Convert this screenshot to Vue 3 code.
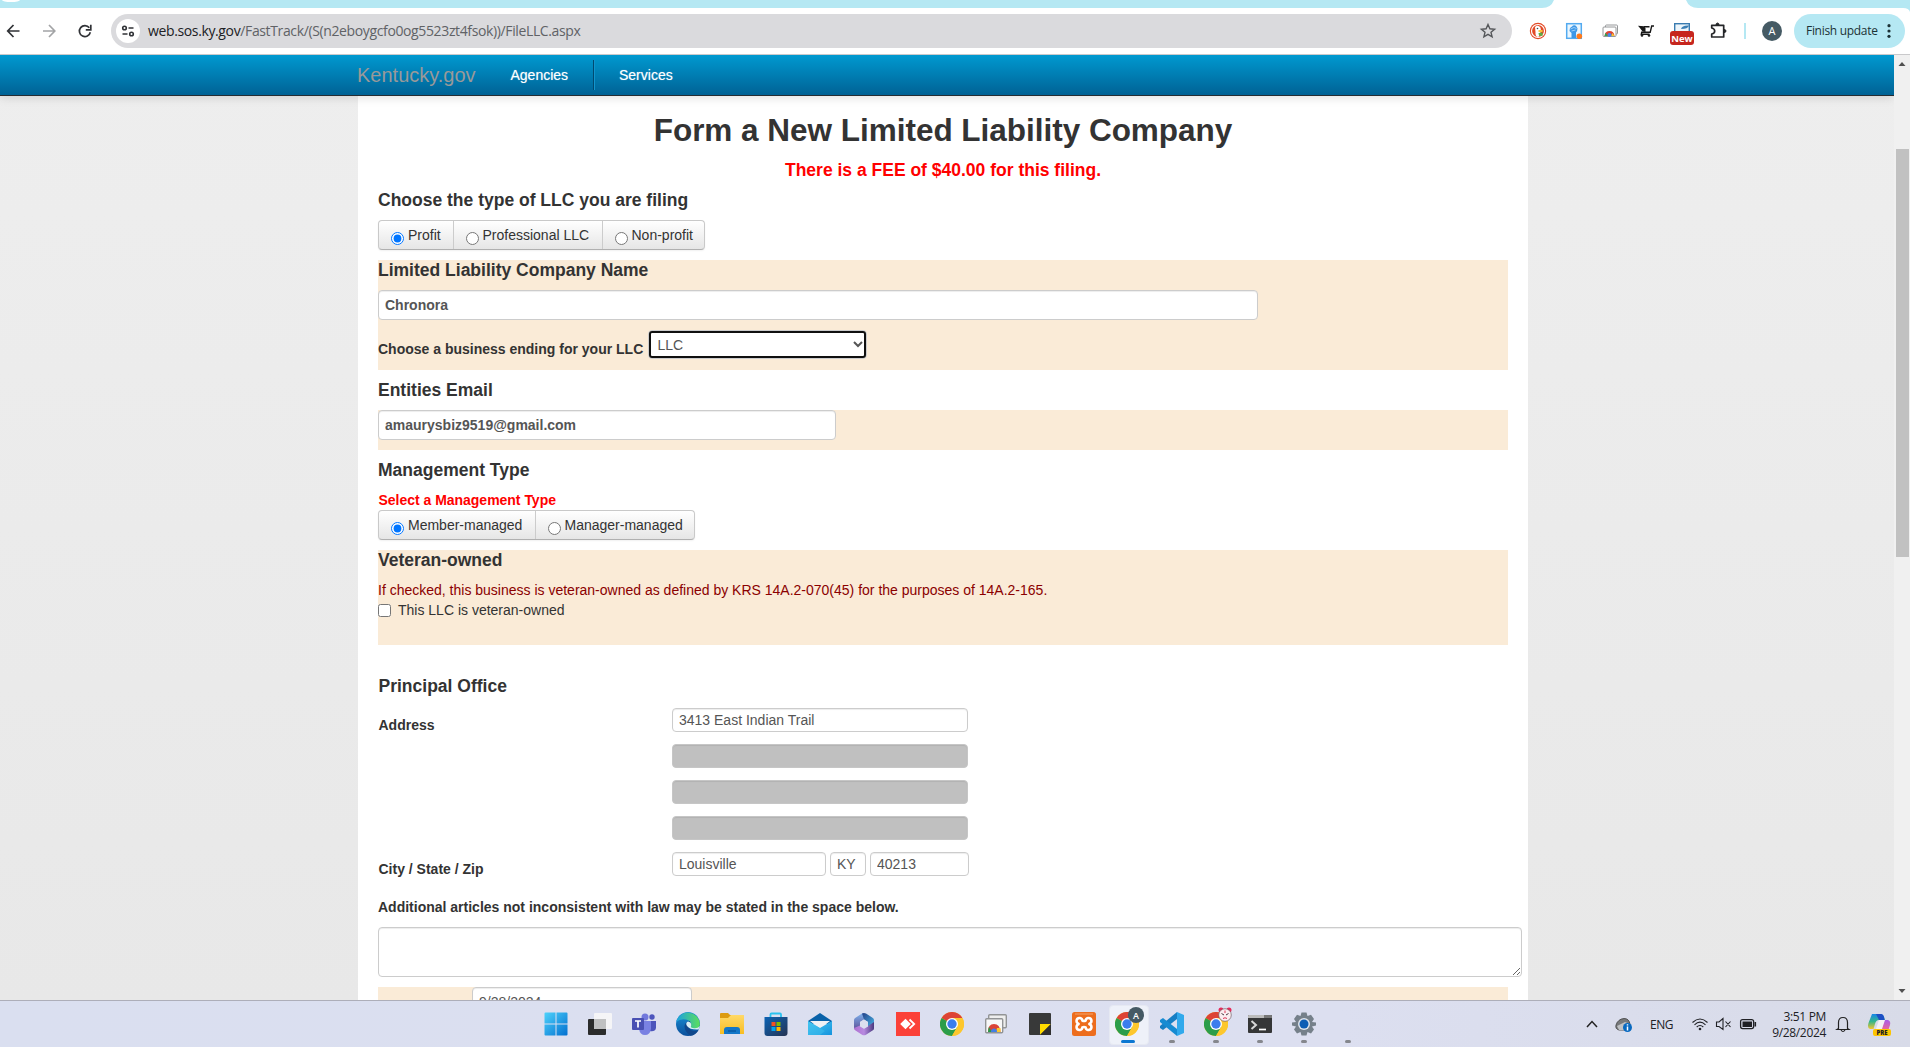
<script setup>
const llcTypes = [
  { label: 'Profit', checked: true, width: 73.5 },
  { label: 'Professional LLC', checked: false, width: 149 },
  { label: 'Non-profit', checked: false, width: 102.5 },
]
const managementTypes = [
  { label: 'Member-managed', checked: true, width: 155.5 },
  { label: 'Manager-managed', checked: false, width: 159.5 },
]
</script>

<template>
  <div class="screen">
    <div class="tabstrip">
      <svg width="1910" height="12" viewBox="0 0 1910 12">
        <rect width="1910" height="12" fill="#fff" />
        <path d="M0 0H1554Q1551 8 1542 8H0Z" fill="#b5e8f3" />
        <path d="M1686 0H1910V12Q1909 8 1903 8H1698Q1689 8 1686 0Z" fill="#b5e8f3" />
        <ellipse cx="11" cy="0" rx="9" ry="2" fill="#fff" />
      </svg>
    </div>

    <div class="toolbar">
      <svg class="nav-icons" width="111" height="46" viewBox="0 0 111 46" fill="none" stroke="#303236" stroke-width="1.7">
        <path d="M19.500 23H8M13.500 17L7.700 23L13.500 29" />
        <path d="M43 23H54.500M49 17L54.800 23L49 29" stroke="#a3a4a6" />
        <path d="M89.300 19.800A5.500 5.500 0 1 0 90.300 24.300" />
        <path d="M90.800 16.800V21.800H85.800" />
      </svg>
      <div class="omnibox">
        <svg class="site" width="24" height="24" viewBox="0 0 24 24" fill="none" stroke="#303236" stroke-width="1.6">
          <circle cx="12" cy="12" r="12" fill="#fff" stroke="none" />
          <circle cx="8.500" cy="9" r="1.800" /><path d="M12.500 9H17.500M6.500 15H11.500" /><circle cx="15.500" cy="15" r="1.800" />
        </svg>
        <div class="url"><b>web.sos.ky.gov</b>/FastTrack/(S(n2eboygcfo0og5523zt4fsok))/FileLLC.aspx</div>
        <svg width="18" height="18" viewBox="0 0 18 18" fill="none" stroke="#55575a" stroke-width="1.4"><path d="M9 2.500L10.900 6.800L15.600 7.200L12 10.300L13.100 14.900L9 12.400L4.900 14.900L6 10.300L2.400 7.200L7.100 6.800Z" /></svg>
      </div>
      <div class="extensions">
        <svg width="36" height="46" viewBox="0 0 36 46">
          <circle cx="18" cy="23" r="8.200" fill="#e34a26" /><circle cx="18" cy="23" r="6.500" fill="none" stroke="#fff" stroke-width="1.200" />
          <path d="M15 19Q18 16.500 20.500 19.500L21 23L18.500 29Q15 29 15.500 24Z" fill="#fff" />
          <path d="M18.500 22H22.500V24H18.500Z" fill="#fdc23b" /><path d="M18.500 25L22.500 24.500V28L19 27.500Z" fill="#57b044" /><circle cx="17.500" cy="20.500" r="0.800" fill="#355" />
        </svg>
        <svg width="36" height="46" viewBox="0 0 36 46">
          <rect x="10.700" y="15.700" width="14.600" height="14.600" fill="#eaf6fe" stroke="#53aaf0" stroke-width="1.500" />
          <path d="M14 20L16 18.500L17 17.500Q19 16.500 20.500 18.500L21.500 20.500Q21.500 23 20 24.500V30H15.500V25L13.500 23Z" fill="#3d98e8" />
          <path d="M14.500 21L18 19.500L20.500 20.500M15.500 23L19.500 22" stroke="#b5dcfa" fill="none" stroke-width=".8" /><circle cx="23.300" cy="28.300" r="2.800" fill="#ff7a1c" />
        </svg>
        <svg width="36" height="46" viewBox="0 0 36 46">
          <rect x="13.500" y="17" width="12" height="9" rx="1" fill="#fff" stroke="#96989a" /><rect x="11" y="19" width="13" height="9.500" rx="1" fill="#fff" stroke="#96989a" />
          <path d="M12.500 28Q13 23 17.500 23T22.500 28Z" fill="#df4434" /><path d="M12.500 28L13.500 24.700L16 28Z" fill="#30a350" /><path d="M22.500 28L20.500 25L19 28Z" fill="#fbc62b" /><circle cx="17.500" cy="27" r="2" fill="#4787eb" />
        </svg>
        <svg width="36" height="46" viewBox="0 0 36 46" fill="none" stroke="#171717" stroke-width="1.400">
          <path d="M10 17.800L16 18.300L17.500 20V24L14.500 23.500L12.500 20.800Z" fill="#171717" stroke="none" />
          <path d="M16 18.800H21.500M14 24.300H22.200L23.700 18H26M13.800 23.500L13.300 26.300H21.500" />
          <circle cx="14" cy="27.500" r="1" fill="#171717" stroke-width=".6" /><circle cx="21" cy="27.500" r="1" fill="#171717" stroke-width=".6" />
        </svg>
        <svg width="36" height="46" viewBox="0 0 36 46">
          <rect x="10.700" y="15.700" width="14.600" height="10" fill="#edf5fa" stroke="#397bb0" stroke-width="1.400" /><path d="M17 21Q18 17 25 17.500Q24 21 17 21Z" fill="#3b7eb4" />
          <rect x="6" y="23" width="24" height="14" rx="3" fill="#c6261e" />
          <text x="18" y="33.500" text-anchor="middle" class="new">New</text>
        </svg>
        <svg width="36" height="46" viewBox="0 0 36 46" fill="none" stroke="#252629" stroke-width="1.700">
          <path d="M11.700 17.300H23.700V29H11.700V26.200Q14.700 25.500 14.700 23.100T11.700 20Z" stroke-linejoin="round" /><path d="M16 17Q16 15 17.500 15T19 17ZM24 21.500Q26 21.500 26 23T24 24.500Z" fill="#252629" stroke-width="1" />
        </svg>
      </div>
      <div class="bar"></div>
      <div class="avatar">A</div>
      <div class="finish"><span>Finish update</span><svg width="4" height="16" viewBox="0 0 4 16" fill="#1c3236"><circle cx="2" cy="2.700" r="1.600" /><circle cx="2" cy="8" r="1.600" /><circle cx="2" cy="13.300" r="1.600" /></svg></div>
    </div>

    <div class="viewport">
      <div class="page">
        <nav class="navbar">
          <span class="brand">Kentucky.gov</span>
          <span class="link agencies">Agencies</span>
          <i class="divider"></i>
          <span class="link services">Services</span>
        </nav>
        <main class="panel">
          <h2><span>Form a New Limited Liability Company</span></h2>
          <p class="fee">There is a FEE of $40.00 for this filing.</p>
          <h4>Choose the type of LLC you are filing</h4>
          <div class="group">
            <label v-for="t in llcTypes" :key="t.label" :style="{ width: t.width + 'px' }"><input type="radio" name="llc" :checked="t.checked">{{ t.label }}</label>
          </div>

          <section class="band name-band">
            <h4>Limited Liability Company Name</h4>
            <input class="field strong company" value="Chronora">
            <div class="ending">
              <strong>Choose a business ending for your LLC</strong>
              <select><option>LLC</option></select>
            </div>
          </section>

          <h4>Entities Email</h4>
          <section class="band email-band"><input class="field strong email" value="amaurysbiz9519@gmail.com"></section>

          <h4>Management Type</h4>
          <p class="select-type">Select a Management Type</p>
          <div class="group tight">
            <label v-for="t in managementTypes" :key="t.label" :style="{ width: t.width + 'px' }"><input type="radio" name="mgmt" :checked="t.checked">{{ t.label }}</label>
          </div>

          <section class="band veteran-band">
            <h4>Veteran-owned</h4>
            <p class="note">If checked, this business is veteran-owned as defined by KRS 14A.2-070(45) for the purposes of 14A.2-165.</p>
            <label class="check"><input type="checkbox">This LLC is veteran-owned</label>
          </section>

          <h4 class="office">Principal Office</h4>
          <div class="row">
            <strong>Address</strong>
            <div class="stack">
              <input class="field" value="3413 East Indian Trail">
              <input class="field off" disabled>
              <input class="field off" disabled>
              <input class="field off" disabled>
            </div>
          </div>
          <div class="row city-row">
            <strong>City / State / Zip</strong>
            <div class="city">
              <input class="field town" value="Louisville">
              <input class="field state" value="KY">
              <input class="field zip" value="40213">
            </div>
          </div>
          <p class="articles">Additional articles not inconsistent with law may be stated in the space below.</p>
          <textarea></textarea>
          <section class="band date-band"><input class="field date" value="9/28/2024"></section>
        </main>
      </div>
      <div class="scrollbar">
        <svg width="16" height="20" viewBox="0 0 16 20"><path d="M8 7L11.500 11H4.500Z" fill="#505050" /></svg>
        <div class="thumb"></div>
        <svg width="16" height="20" viewBox="0 0 16 20"><path d="M8 13L11.500 9H4.500Z" fill="#505050" /></svg>
      </div>
    </div>

    <footer class="taskbar">
      <svg width="0" height="0" class="defs">
        <defs>
          <linearGradient id="win" x1="0" y1="0" x2="1" y2="1"><stop stop-color="#4dd2fb" /><stop offset="1" stop-color="#0370d0" /></linearGradient>
          <linearGradient id="edge1" x1="0" y1="0" x2="1" y2="0"><stop stop-color="#1ba0e2" /><stop offset="1" stop-color="#5bdf5c" /></linearGradient>
          <linearGradient id="edge2" x1="0" y1="0" x2="0" y2="1"><stop stop-color="#1a93d8" /><stop offset="1" stop-color="#0b4f9c" /></linearGradient>
          <linearGradient id="fold" x1="0" y1="0" x2="0" y2="1"><stop stop-color="#ffd968" /><stop offset="1" stop-color="#f8bd22" /></linearGradient>
          <linearGradient id="store" x1="0" y1="0" x2="1" y2="1"><stop stop-color="#0b63b5" /><stop offset="1" stop-color="#263352" /></linearGradient>
          <linearGradient id="mail" x1="0" y1="0" x2="1" y2="1"><stop stop-color="#47c9f3" /><stop offset="1" stop-color="#1593dd" /></linearGradient>
          <linearGradient id="m1" x1="0" y1="0" x2="0" y2="1"><stop stop-color="#7fb2ec" /><stop offset="1" stop-color="#5c4f96" /></linearGradient>
          <linearGradient id="m2" x1="0" y1="0" x2="1" y2="1"><stop stop-color="#243f86" /><stop offset="1" stop-color="#47b9ea" /></linearGradient>
          <linearGradient id="m3" x1="0" y1="0" x2="1" y2="0"><stop stop-color="#b06fd0" /><stop offset=".5" stop-color="#b78be0" /><stop offset="1" stop-color="#4a3a80" /></linearGradient>
          <linearGradient id="cop1" x1="0" y1="0" x2="0" y2="1"><stop stop-color="#1687e8" /><stop offset=".5" stop-color="#35b68b" /><stop offset="1" stop-color="#f7c62c" /></linearGradient>
          <linearGradient id="cop2" x1="0" y1="0" x2="0" y2="1"><stop stop-color="#a95de8" /><stop offset="1" stop-color="#f2688c" /></linearGradient>
          <symbol id="chrome" viewBox="0 0 24 24">
            <circle cx="12" cy="12" r="12" fill="#fdc72d" />
            <path d="M12 12L1.600 6A12 12 0 0 1 22.400 6Z" fill="#dd4335" />
            <path d="M12 12L1.600 6A12 12 0 0 0 12 24L17.200 15Z" fill="#2b9d4a" />
            <path d="M12 6H22.400A12 12 0 0 1 12 24L17.200 15Z" fill="#fdc72d" />
            <circle cx="12" cy="12" r="6" fill="#fff" /><circle cx="12" cy="12" r="4.700" fill="#3b7ded" />
          </symbol>
        </defs>
      </svg>
      <div class="apps">
        <div class="app"><svg width="24" height="24" viewBox="0 0 24 24" fill="url(#win)"><path d="M.5 1.500Q.5.500 1.500.500H11.500V11.500H.5ZM12.500.500H22.500Q23.500.500 23.500 1.500V11.500H12.500ZM.5 12.500H11.500V23.500H1.500Q.5 23.500.5 22.500ZM12.500 12.500H23.500V22.500Q23.500 23.500 22.500 23.500H12.500Z" /></svg></div>
        <div class="app"><svg width="24" height="24" viewBox="0 0 24 24"><rect y="7" width="18" height="16" rx="1" fill="#2b2c2c" /><rect x="6" y="1" width="18" height="16" rx="1" fill="#f5f5f7" /><path d="M6 7H18V17H6Z" fill="#bfc0c1" /></svg></div>
        <div class="app"><svg width="24" height="24" viewBox="0 0 24 24"><circle cx="13" cy="5" r="3.500" fill="#7279dc" /><circle cx="20" cy="5" r="2.700" fill="#4d55bd" /><path d="M16 9H24V16Q23 20 18 19Z" fill="#4c55bb" /><path d="M7 9H19V17Q18 23 13 23T7 17Z" fill="#7981e2" /><rect y="6" width="12" height="12" rx="1" fill="#4950b3" /><path d="M3 9H9M6 9V15.500" stroke="#fff" stroke-width="1.700" /></svg></div>
        <div class="app"><svg width="24" height="24" viewBox="0 0 24 24"><circle cx="12" cy="12" r="12" fill="url(#edge2)" /><path d="M.2 10A12 12 0 0 1 23.900 12Q23.500 17 18 17Q13.500 17 15 14Q16 9 10 7.500Q4 6.500.2 10Z" fill="url(#edge1)" /><path d="M14 9Q9 10 8.500 14Q8.500 20 14.500 23.800Q20 23 22.500 18Q16 20.500 13.500 16.500Q12 14 14.500 12Z" fill="#10478c" /><path d="M12 9.500Q9 11 11 14Q14 18 22.500 17.500L24 14Q21 17 17 16Q14 15.500 15.200 13.500Q15.500 10 12 9.500Z" fill="#d9eef4" /></svg></div>
        <div class="app"><svg width="24" height="24" viewBox="0 0 24 24"><path d="M0 2Q0 1 1 1H8L10 3H22Q24 3 24 5V8H0Z" fill="#dc9b11" /><path d="M0 6H8L11 3H23Q24 3 24 4V22H0Z" fill="url(#fold)" /><path d="M4 22V18Q4 15 7 15H17Q20 15 20 18V22Z" fill="#1477c8" /><path d="M8 19H16" stroke="#075aa5" stroke-width="1.500" /></svg></div>
        <div class="app"><svg width="24" height="24" viewBox="0 0 24 24"><path d="M6.500 6V2.500Q6.500 1.500 7.500 1.500H16Q17 1.500 17 2.500V6" fill="none" stroke="#29c2ef" stroke-width="1.800" /><path d="M.5 5H23.500V21Q23.500 24 20.500 24H3.500Q.5 24 .5 21Z" fill="url(#store)" /><path d="M7.500 10H11.500V14H7.500Z" fill="#f25022" /><path d="M12.500 10H16.500V14H12.500Z" fill="#7fba00" /><path d="M7.500 15H11.500V19H7.500Z" fill="#00a4ef" /><path d="M12.500 15H16.500V19H12.500Z" fill="#ffb900" /></svg></div>
        <div class="app"><svg width="24" height="24" viewBox="0 0 24 24"><path d="M0 9L12 1L24 9V12H0Z" fill="#0861a9" /><path d="M2 9H22L12 17Z" fill="#eff1f5" /><path d="M0 9L12 16L24 9V23H0Z" fill="url(#mail)" /><path d="M0 9L17 19L12 23H0Z" fill="#3fc0ed" opacity=".5" /></svg></div>
        <div class="app"><svg width="24" height="24" viewBox="0 0 24 24"><path d="M12 1.500V7.500L8 10V14.500L5 18Q2 18 2 15V8Q2 6.500 3.500 5.700L10 1.500Q11 1 12 1.500Z" fill="url(#m1)" /><path d="M10 1.500Q12 .5 14 1.500L20.500 5.700Q22 6.500 22 8V16L16 14V10L12 7.500Z" fill="url(#m2)" /><path d="M2 16L8 13.500L12 16.500L16 14L22 10V16.500Q22 17.800 20.500 18.600L14 22.700Q12 24 10 22.700L3.500 18.600Q2 17.500 2 16Z" fill="url(#m3)" /><path d="M12 7.500L16 10V14.500L12 16.800L8 14.500V10Z" fill="#dcdfef" /></svg></div>
        <div class="app"><svg width="24" height="24" viewBox="0 0 24 24"><rect width="24" height="24" fill="#fb4138" /><path d="M9.500 6.700L14.800 12L9.500 17.300L4.200 12Z" fill="#fff" /><path d="M13.500 7.500L18.200 12L13.500 16.500" fill="none" stroke="#fff" stroke-width="1.800" /></svg></div>
        <div class="app"><svg width="24" height="24"><use href="#chrome" /></svg></div>
        <div class="app"><svg width="24" height="24" viewBox="0 0 24 24"><rect x="4.700" y="2.700" width="17.600" height="13" rx="1" fill="#eee" stroke="#929496" stroke-width="1.400" /><rect x="1.700" y="6.700" width="17" height="14" rx="1" fill="#f8f8f8" stroke="#929496" stroke-width="1.400" /><path d="M4 20Q4 12 10 12T16.500 20Z" fill="#db4437" /><path d="M4 20L4.800 14.800L8 20Z" fill="#249c4c" /><path d="M13 16H16.500V20H12Z" fill="#fbc82e" /><path d="M7 20Q7 16.500 10 16.500T13 20Z" fill="#427fe6" /></svg></div>
        <div class="app"><svg width="24" height="24" viewBox="0 0 24 24"><rect x="1" y="1" width="22" height="22" rx="1" fill="#383939" /><path d="M12 12H23L12 23Z" fill="#ffdb00" /><path d="M23 12V23H12Z" fill="#303030" /></svg></div>
        <div class="app"><svg width="24" height="24" viewBox="0 0 24 24"><rect width="24" height="24" rx="2.500" fill="#ed6d1d" /><path d="M3 2H21" stroke="#f5a36a" /><path d="M8 6Q4.700 5.800 4.500 8.800Q4.500 11 6.700 12Q4.500 13 4.500 15.200Q4.700 18.200 8 18Q10.200 17.600 10.300 15.500Q12 14.700 13.700 15.500Q13.800 17.600 16 18Q19.300 18.200 19.500 15.200Q19.500 13 17.300 12Q19.500 11 19.500 8.800Q19.300 5.800 16 6Q13.800 6.400 13.700 8.500Q12 9.300 10.300 8.500Q10.200 6.400 8 6Z" fill="none" stroke="#fff" stroke-width="2.500" stroke-linejoin="round" /></svg></div>
        <div class="app active"><svg width="36" height="38" viewBox="0 0 36 38"><use href="#chrome" x="5" y="7" width="24" height="24" /><circle cx="26" cy="10" r="8" fill="#455a64" /><text x="26" y="13.500" text-anchor="middle" class="badge">A</text></svg><i></i></div>
        <div class="app run"><svg width="24" height="24" viewBox="0 0 24 24"><path d="M17 0L24 3V21L17 24Z" fill="#31a9ec" /><path d="M17 0V7L3 18L0 16V14Z" fill="#177fc4" /><path d="M17 24V17L3 6L0 8V10Z" fill="#168bd2" /></svg><i></i></div>
        <div class="app run"><svg width="36" height="38" viewBox="0 0 36 38"><use href="#chrome" x="6" y="7" width="24" height="24" /><circle cx="23" cy="5" r="2.500" fill="#e62a58" /><circle cx="31" cy="5" r="2.500" fill="#e62a58" /><circle cx="27" cy="10" r="6.300" fill="#fbecef" stroke="#5e4a50" stroke-width=".6" /><path d="M23.500 8.500L26 10M30.500 8.500L28 10" stroke="#473940" stroke-width="1" /><path d="M25 13.500Q27 12 29 13.500M27 5.500V8" fill="none" stroke="#dd3555" /></svg><i></i></div>
        <div class="app run"><svg width="24" height="24" viewBox="0 0 24 24"><rect y="3" width="24" height="18" rx="1" fill="#353637" /><path d="M0 6V4Q0 3 1 3H23Q24 3 24 4V6Z" fill="#777" /><path d="M0 6V4Q0 3 1 3H16V6Z" fill="#bbb" /><path d="M3.500 9L8 13L3.500 17" fill="none" stroke="#d7d7d7" stroke-width="2" /><path d="M11 17.500H18" stroke="#fff" stroke-width="1.700" /></svg><i></i></div>
        <div class="app run"><svg width="24" height="24" viewBox="0 0 24 24"><path d="M9.500 0.500H14.500L15.500 4L19 2.700L22 7L20 10L24 10.500V13.500L20 14.500L22 17.500L19 21.500L15.500 20L14.500 23.500H9.500L8.500 20L5 21.500L2 17.500L4 14.500L0 13.500V10.500L4 10L2 7L5 2.700L8.500 4Z" fill="#75808a" /><circle cx="12" cy="12" r="6" fill="#dfe4ec" /><circle cx="12" cy="12" r="4.500" fill="#0e5eb4" /></svg><i></i></div>
        <div class="app run"><i></i></div>
      </div>
      <div class="tray">
        <svg width="76" height="46" viewBox="1574 1001 76 46">
          <path d="M1587 1027L1592 1021.500L1597 1027" fill="none" stroke="#222" stroke-width="1.500" />
          <path d="M1619 1030Q1615 1029 1616 1025Q1618 1019 1624 1018.500Q1629 1018.500 1630 1024V1030Z" fill="#77797b" stroke="#3e3e3e" stroke-width=".8" /><path d="M1617 1026L1625 1022L1630 1024V1030H1619Z" fill="#bfc1c4" />
          <circle cx="1627.500" cy="1027.500" r="4.500" fill="#0869c0" /><path d="M1627.500 1024.300V1025.500M1627.500 1026.600V1030.500" stroke="#fff" stroke-width="1.500" />
        </svg>
        <span class="lang">ENG</span>
        <svg class="status" width="66" height="46" viewBox="1692 1001 66 46" fill="none" stroke="#202125" stroke-width="1.100">
          <path d="M1692.500 1022.500Q1700 1015.500 1707.500 1022.500M1694.500 1024.800Q1700 1019.500 1705.500 1024.800M1696.700 1027Q1700 1024 1703.300 1027" /><circle cx="1700" cy="1029" r="1.300" fill="#202125" stroke="none" />
          <path d="M1716.500 1022H1719L1723 1018.500V1029.500L1719 1026.500H1716.500ZM1725.500 1021.500L1730.500 1027M1730.500 1021.500L1725.500 1027" />
          <rect x="1740.600" y="1019.600" width="13" height="9" rx="2" stroke-width="1.300" /><rect x="1742.500" y="1021.500" width="9.500" height="5.500" fill="#202125" stroke="none" /><path d="M1755.300 1022V1026.500" stroke-width="1.600" />
        </svg>
        <div class="clock"><span>3:51 PM</span><span>9/28/2024</span></div>
        <svg width="72" height="46" viewBox="1830 1001 72 46">
          <path d="M1838.500 1028.500V1022.500Q1838.500 1017.500 1843 1017.500T1847.500 1022.500V1028.500L1849 1029.500H1837ZM1841 1030Q1843 1033 1845 1030" fill="none" stroke="#222" stroke-width="1.200" />
          <path d="M1872 1014H1880Q1883 1014 1884 1017L1885 1020H1879Q1876 1020 1875 1024L1873.500 1029H1870Q1867 1028 1868.500 1023Z" fill="url(#cop1)" /><path d="M1876 1014H1881Q1884 1014 1884.500 1020H1879Z" fill="#1d4fc4" /><path d="M1884 1020H1888Q1891 1021 1890 1025L1888 1031H1876L1880 1029Z" fill="url(#cop2)" /><path d="M1879 1020H1885L1882 1029H1876Z" fill="#f4f1f4" />
          <rect x="1873" y="1029" width="18" height="7" rx="2" fill="#fdc500" /><text x="1882" y="1035" text-anchor="middle" class="pre">PRE</text>
        </svg>
      </div>
    </footer>
  </div>
</template>

<style>
body { margin: 0; overflow: hidden; }
</style>

<style scoped>
* { box-sizing: border-box; }
.screen { width: 1910px; height: 1047px; overflow: hidden; display: flex; flex-direction: column; background: #fff; font: 14px/20px "Liberation Sans", Arial, sans-serif; color: #333; }
.tabstrip { height: 8px; flex: none; }
.tabstrip svg { display: block; }
.toolbar { height: 46px; flex: none; display: flex; align-items: center; font-family: "Open Sans", "Noto Sans", sans-serif; position: relative; }
.nav-icons { flex: none; }
.omnibox { width: 1401px; height: 34px; border-radius: 17px; background: #dadadd; display: flex; align-items: center; padding: 0 15px 0 5px; }
.url { flex: 1; padding-left: 8px; color: #606266; font-size: 14px; letter-spacing: -.37px; white-space: nowrap; }
.url b { font-weight: 400; color: #202124; }
.extensions { display: flex; margin-left: 8px; }
.new { font: 700 9.500px "Open Sans", sans-serif; fill: #fff; }
.bar { width: 2px; height: 16px; margin-left: 8px; background: #b5e8f3; }
.avatar { width: 20px; height: 20px; margin-left: 16px; border-radius: 50%; background: #455a64; color: #fff; font-size: 11px; text-align: center; }
.finish { width: 111px; height: 34px; margin-left: 12px; border-radius: 17px; background: #b5e8f3; display: flex; align-items: center; justify-content: space-between; padding: 0 14px 0 12px; color: #1c3236; font-size: 12px; letter-spacing: -.3px; white-space: nowrap; }
.viewport { height: 946px; flex: none; display: flex; overflow: hidden; border-top: 1px solid #c9c9cb; }
.page { width: 1894px; height: 945px; overflow: hidden; background: linear-gradient(#eee, #e8e8e8); }
.navbar { height: 41px; display: flex; align-items: center; padding-left: 357px; background: linear-gradient(#0099d0, #006295); border-bottom: 1px solid #252d33; box-shadow: 0 1px 10px rgba(0,0,0,.14); position: relative; white-space: nowrap; }
.brand { width: 153.5px; font-size: 20px; color: #999; }
.link { color: #fff; text-shadow: 0 0 1px rgba(255,255,255,.5); }
.agencies { width: 82.5px; }
.divider { width: 2px; height: 30px; background: linear-gradient(90deg, #004a70 50%, #1295cd 50%); }
.services { margin-left: 24px; }
.panel { width: 1170px; height: 904px; margin-left: 358px; padding: 14px 20px 0; background: #fff; overflow: hidden; white-space: nowrap; }
h2, h4, p { margin: 0; }
h2 { font-size: 31.500px; line-height: 40px; text-align: center; letter-spacing: -.02px; }
.fee { margin-top: 10px; font-size: 17.500px; font-weight: 700; color: red; text-align: center; }
h4 { margin: 10px 0; font-size: 17.500px; line-height: 20px; }
.group { display: flex; width: max-content; height: 30px; border: 1px solid #c9c9c9; border-bottom-color: #b0b0b0; border-radius: 4px; background: linear-gradient(#fff, #e6e6e6); box-shadow: 0 1px 2px rgba(0,0,0,.06); }
.group label { display: flex; align-items: flex-start; padding: 4px 0 0 12px; }
.group label + label { border-left: 1px solid #ccc; }
.group input { width: 13px; height: 13px; margin: 7px 4px 0 0; }
.band { background: #faebd7; }
.band h4 { margin-top: 0; }
.name-band { height: 110px; margin-top: 10px; }
.field { display: block; height: 24px; padding: 0 6px; border: 1px solid #ccc; border-radius: 4px; background: #fff; box-shadow: inset 0 1px 1px rgba(0,0,0,.075); font: 14px/20px "Liberation Sans", Arial, sans-serif; color: #555; outline: none; }
.strong { height: 30px; font-weight: 700; }
.company { width: 880px; }
.ending { display: flex; padding-top: 10px; }
.ending strong { width: 269.5px; padding-top: 9px; }
select { width: 219px; height: 29px; margin: 0; padding: 0 3px 0 5px; border: 1px solid #ccc; border-radius: 4px; background: #fff; color: #555; font: 14px "Liberation Sans", Arial, sans-serif; outline: 2px solid #101010; outline-offset: -3px; }
.email { width: 458px; }
.email-band { height: 40px; }
.select-type { color: red; font-weight: 700; padding-left: .5px; letter-spacing: -.02px; }
.veteran-band { height: 95px; margin-top: 10px; }
.note { color: #8b0000; }
.check { display: flex; height: 20px; }
.check input { width: 13px; height: 13px; margin: 4px 7px 0 0; }
.office { margin: 31px 0 12px .5px; }
.row { display: flex; height: 144px; padding-left: .5px; }
.row > strong { width: 293.5px; padding-top: 7px; }
.stack { display: flex; flex-direction: column; gap: 12px; }
.stack .field { width: 296px; }
.stack .off { background: #c0c0c0; border-color: #c6c6c6; }
.city-row { height: 45px; }
.city { display: flex; gap: 4px; }
.town { width: 154px; }
.state { width: 36px; }
.zip { width: 99px; }
.articles { font-weight: 700; }
textarea { display: block; width: 1144px; height: 50px; margin: 10px 0; border: 1px solid #ccc; border-radius: 4px; box-shadow: inset 0 1px 1px rgba(0,0,0,.075); outline: none; }
.date-band { height: 40px; padding-left: 94px; }
.date { width: 220px; height: 30px; }
.scrollbar { width: 16px; background: #f0f0f0; display: flex; flex-direction: column; }
.scrollbar svg { display: block; flex: none; }
.thumb { width: 13px; height: 408px; margin: 74px 0 423px 2px; background: #c1c1c1; flex: none; }
.taskbar { height: 47px; flex: none; border-top: 1px solid #adaeb9; background: linear-gradient(90deg, #dadff0, #dcdff0 70%, #d8dbe8); display: flex; font-family: "Open Sans", "Noto Sans", sans-serif; color: #202125; }
.defs { position: absolute; }
.apps { box-sizing: content-box; width: 836px; padding-left: 534px; display: flex; }
.app { width: 44px; height: 46px; display: flex; align-items: center; justify-content: center; position: relative; flex: none; }
.app i { position: absolute; bottom: 4px; left: 19px; width: 6px; height: 3px; border-radius: 2px; background: #85878d; }
.app.active::before { content: ""; position: absolute; left: 3px; top: 4px; width: 38px; height: 38px; border-radius: 4px; background: #eef1f9; border: 1px solid #e6e9f2; }
.app.active svg, .app.run svg { position: relative; }
.app.active i { left: 15px; width: 14px; background: #0c77d2; }
.badge { font: 600 9px "Open Sans", sans-serif; fill: #fff; }
.tray { flex: 1; display: flex; align-items: center; padding-left: 204px; }
.tray svg { flex: none; }
.lang { width: 42px; font-size: 12px; letter-spacing: -.5px; padding-top: 2px; }
.clock { width: 72px; display: flex; flex-direction: column; align-items: flex-end; font-size: 12px; line-height: 16px; letter-spacing: -.33px; padding: 2px 4px 0 0; }
.pre { font: 800 6px "Open Sans", sans-serif; fill: #222; }
</style>
